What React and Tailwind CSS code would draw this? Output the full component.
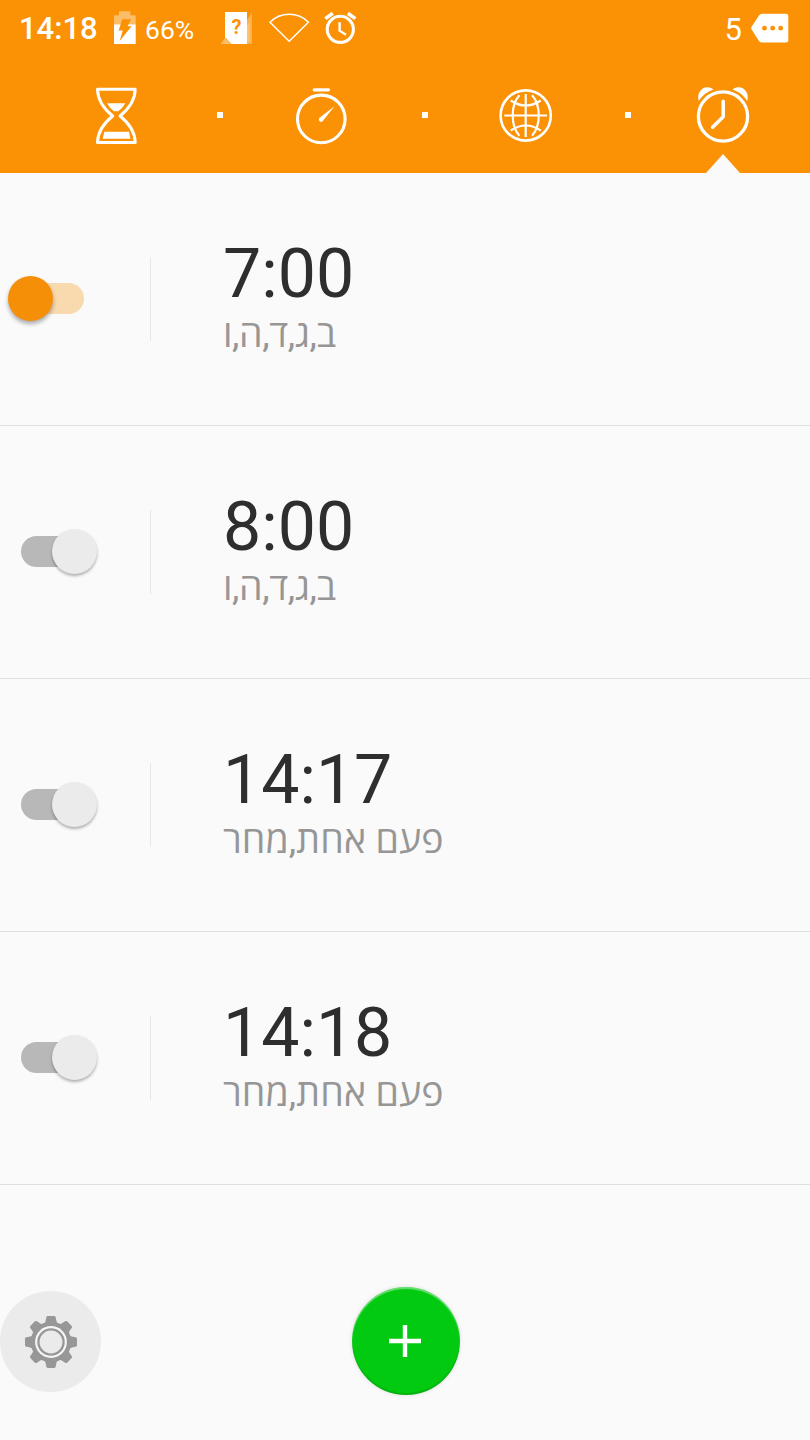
import React from "react";

const ORANGE = "#fb9105";

const alarms = [
  { time: "7:00", days: "ב,ג,ד,ה,ו", on: true, tracking: "tracking-[-0.4px]" },
  { time: "8:00", days: "ב,ג,ד,ה,ו", on: false, tracking: "tracking-[-0.4px]" },
  { time: "14:17", days: "פעם אחת,מחר", on: false, tracking: "tracking-[0.1px]" },
  { time: "14:18", days: "פעם אחת,מחר", on: false, tracking: "tracking-[0.1px]" },
];

function BatteryIcon() {
  return (
    <svg className="ml-[16px] h-[57px] w-[22px] shrink-0" viewBox="114 0 22 57">
      <path d="M114 24.3V15.3H119V11.3H130.3V15.3H135.7V24.3Z" fill="#fff" fillOpacity=".4" />
      <path d="M114 24.3H135.7V44H114Z" fill="#fff" />
      <path d="M122.3 19.3H131L127.6 26.2H131.6L119.6 41L122.8 30.6H118.6Z" fill={ORANGE} />
    </svg>
  );
}

function SimIcon() {
  return (
    <svg className="ml-[26px] h-[57px] w-[33px] shrink-0" viewBox="220 0 33 57">
      <path d="M220.7 44L225 38L231.7 44Z" fill="#fff" fillOpacity=".4" />
      <path d="M252 12.7V44H247V20Z" fill="#fff" fillOpacity=".3" />
      <path d="M250 22V42H247V25Z" fill="#fff" fillOpacity=".2" />
      <path d="M225 12H247V44H231.7L225 37.3Z" fill="#fff" />
      <text x="236.4" y="34.3" textAnchor="middle" fill={ORANGE} className="font-['Roboto',sans-serif] text-[20px] font-bold">?</text>
    </svg>
  );
}

function WifiIcon() {
  return (
    <svg className="ml-[15px] h-[57px] w-[42px] shrink-0" viewBox="268 0 42 57" fill="none" stroke="#fff" strokeWidth="1.5">
      <path d="M270 22.2C280.5 11.7 298 11.7 308.4 22.2L289.2 41.3Z" />
    </svg>
  );
}

function SmallAlarmIcon() {
  return (
    <svg className="ml-[13px] h-[57px] w-[36px] shrink-0" viewBox="323 0 36 57" fill="none" stroke="#fff">
      <circle cx="340.3" cy="29.3" r="13.1" strokeWidth="3.1" />
      <path d="M339.6 22.3V30.7L346 34.7" strokeWidth="2.4" />
      <path d="M325.3 18.6L332.8 13.2M347.9 13.2L355.3 18.6" strokeWidth="3.6" />
    </svg>
  );
}

function TagIcon() {
  return (
    <svg className="ml-[8px] h-[57px] w-[39px] shrink-0" viewBox="750 0 39 57">
      <path d="M751.6 26.8L759 15.5Q760.2 13.7 762.3 13.7H786Q788.3 13.7 788.3 16V40.3Q788.3 42.6 786 42.6H762.3Q760.2 42.6 759 40.9L751.6 29.6Q750.8 28.2 751.6 26.8Z" fill="#fff" />
      <g fill={ORANGE}>
        <circle cx="764.5" cy="28.2" r="2.4" />
        <circle cx="772.7" cy="28.2" r="2.4" />
        <circle cx="780.7" cy="28.2" r="2.4" />
      </g>
    </svg>
  );
}

function HourglassIcon() {
  return (
    <svg className="h-[64px] w-[60px] shrink-0" viewBox="86 84 60 64">
      <path d="M97.5 89.3H135.2C135 101 127.5 110 120 116C127.5 122 135 131 135.2 142.5H97.5C97.7 131 105.2 122 112.7 116C105.2 110 97.700 101 97.5 89.3Z" fill="none" stroke="#fff" strokeWidth="3" strokeLinejoin="round" />
      <path d="M107 103.3H125.3Q122.5 108.5 118.3 111.3H114Q109.8 108.5 107 103.3Z" fill="#fff" />
      <path d="M104.3 131.7H129L130.4 138.7H102.7Z" fill="#fff" />
    </svg>
  );
}

function StopwatchIcon() {
  return (
    <svg className="ml-[68px] h-[64px] w-[60px] shrink-0" viewBox="291 84 60 64">
      <rect x="312.7" y="88.3" width="17.3" height="3.2" rx="1.4" fill="#fff" />
      <circle cx="321.3" cy="118.9" r="23.8" fill="none" stroke="#fff" strokeWidth="3.1" />
      <path d="M334.5 106.2L323.2 120.4A2.3 2.3 0 1 1 319.900 117.5Z" fill="#fff" />
    </svg>
  );
}

function GlobeIcon() {
  return (
    <svg className="ml-[68px] h-[64px] w-[60px] shrink-0" viewBox="496 84 60 64" fill="none" stroke="#fff" strokeWidth="2.2">
      <circle cx="525.7" cy="115.5" r="25.1" strokeWidth="2.6" />
      <path d="M504.3 115.5H547M525.7 94V137" />
      <path d="M519.4 95.3C510.5 105 510.5 126 519.4 135.7M532 95.3C541 105 541 126 532 135.7" />
      <path d="M510.7 100.5Q525.7 110.5 540.8 100.5M510.7 130.5Q525.7 120.5 540.8 130.5" />
    </svg>
  );
}

function AlarmTabIcon() {
  return (
    <svg className="ml-[62px] h-[64px] w-[60px] shrink-0" viewBox="693 84 60 64">
      <circle cx="723" cy="116.5" r="24.6" fill="none" stroke="#fff" strokeWidth="3.3" />
      <path d="M723.2 101.2V116.8L712.6 127.2" fill="none" stroke="#fff" strokeWidth="3.5" strokeLinecap="round" strokeLinejoin="round" />
      <path d="M698.8 101C696.3 93.5 701.5 87 707.5 87.2C710.3 87.3 712.2 88.3 713.5 89.6C707 91.7 702 95.6 698.8 101Z" fill="#fff" />
      <path d="M747.2 101C749.7 93.5 744.5 87 738.5 87.2C735.7 87.3 733.8 88.3 732.5 89.6C739 91.7 744 95.6 747.2 101Z" fill="#fff" />
    </svg>
  );
}

function GearIcon() {
  return (
    <svg className="size-[54px]" viewBox="-27 -27 54 54">
      <g fill="#979797">
        <circle r="20.3" />
        {[0, 45, 90, 135, 180, 225, 270, 315].map((a) => (
          <path key={a} transform={`rotate(${a})`} d="M-7 -17.5Q-5.6 -19.5 -5.2 -22L-4.7 -24.6Q-4.4 -26 -3.2 -26H3.2Q4.4 -26 4.7 -24.6L5.2 -22Q5.6 -19.5 7 -17.5Z" />
        ))}
      </g>
      <circle r="15.9" fill="#f6f6f6" />
      <circle r="12.6" fill="#ebebeb" stroke="#979797" strokeWidth="2.3" />
    </svg>
  );
}

function Dot({ gap }) {
  return <span className={`mb-[2px] size-[6px] shrink-0 bg-white ${gap}`} />;
}

function Switch({ on }) {
  return (
    <button
      role="switch"
      aria-checked={on}
      className={
        on
          ? "ml-[22px] flex h-[31px] w-[62px] shrink-0 items-center rounded-full bg-[#f9d9ae]"
          : "ml-[21px] flex h-[31px] w-[62px] shrink-0 items-center justify-end rounded-full bg-[#b8b8b8]"
      }
    >
      <span
        className={
          on
            ? "-ml-[14px] size-[45px] shrink-0 rounded-full bg-[#f58f07] shadow-[0_3px_4px_rgba(0,0,0,0.32)]"
            : "-mr-[14px] size-[45px] shrink-0 rounded-full bg-[#ebebeb] shadow-[0_2px_3px_rgba(0,0,0,0.3)]"
        }
      />
    </button>
  );
}

function AlarmRow({ time, days, on, tracking }) {
  return (
    <li className="flex h-[253px] items-start border-b border-[#dedede]">
      <div className="flex h-[251px] w-[150px] shrink-0 items-center">
        <Switch on={on} />
      </div>
      <div className="mt-[84px] h-[84px] w-px bg-[#e6e6e6]" />
      <div className="flex flex-col items-start pt-[61px] pl-[72px]">
        <span className="text-[68px] leading-[80px] text-[#2e2e2e]">{time}</span>
        <span dir="rtl" className={`-mt-[3px] font-['Roboto','Open_Sans','Noto_Sans',sans-serif] text-[37.5px] leading-[46px] whitespace-nowrap text-[#969696] ${tracking}`}>
          {days}
        </span>
      </div>
    </li>
  );
}

export default function App() {
  return (
    <div className="flex h-[1440px] w-[810px] flex-col overflow-hidden bg-[#fafafa] font-['Roboto',sans-serif]">
      <header className="relative h-[173px] shrink-0 bg-[#fb9105] text-white">
        <div className="flex h-[57px] items-center pl-[19px]">
          <span className="w-[79px] text-[31px] font-medium leading-[57px]">14:18</span>
          <BatteryIcon />
          <span className="ml-[9px] w-[49px] pt-[3px] text-[26.5px] leading-[54px]">66%</span>
          <SimIcon />
          <WifiIcon />
          <SmallAlarmIcon />
          <div className="ml-auto flex items-center pr-[21px]">
            <span className="pt-[3px] text-[31px] leading-[54px]">5</span>
            <TagIcon />
          </div>
        </div>
        <nav className="flex items-center pt-[27px] pl-[86px]">
          <HourglassIcon />
          <Dot gap="ml-[71px]" />
          <StopwatchIcon />
          <Dot gap="ml-[71px]" />
          <GlobeIcon />
          <Dot gap="ml-[69px]" />
          <AlarmTabIcon />
        </nav>
        <svg className="absolute bottom-0 left-[706px] h-[19px] w-[34px]" viewBox="0 0 34 19">
          <path d="M0 19L17 0L34 19Z" fill="#fafafa" />
        </svg>
      </header>

      <ul className="shrink-0">
        {alarms.map((alarm) => (
          <AlarmRow key={alarm.time} {...alarm} />
        ))}
      </ul>

      <footer className="flex items-start pt-[102px]">
        <button aria-label="Settings" className="mt-[4px] flex size-[101px] items-center justify-center rounded-full bg-[#ebebeb]">
          <GearIcon />
        </button>
        <button
          aria-label="Add alarm"
          className="ml-[251px] flex size-[108px] items-center justify-center rounded-full bg-[#02ca10] shadow-[inset_0_2px_1px_rgba(255,255,255,0.4),inset_0_-2px_1px_rgba(0,90,0,0.2),0_0_4px_rgba(0,0,0,0.12)]"
        >
          <svg className="mr-[2px] size-[32px]" viewBox="0 0 32 32">
            <path d="M0 16H32M16 0V32" stroke="#fff" strokeWidth="4.4" />
          </svg>
        </button>
      </footer>
    </div>
  );
}
